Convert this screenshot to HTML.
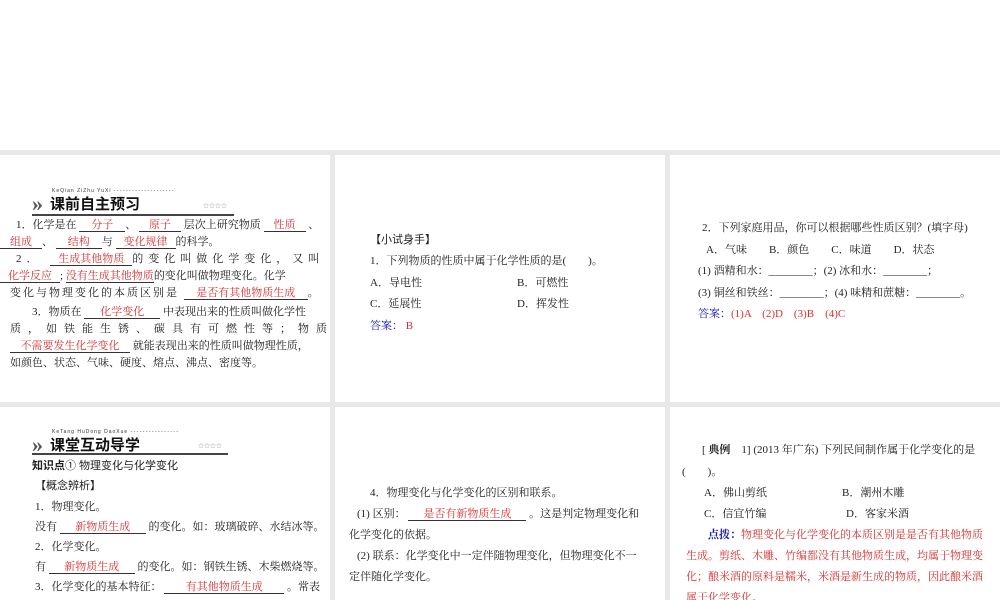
<!DOCTYPE html>
<html><head><meta charset="utf-8"><style>
*{margin:0;padding:0}
body{width:1000px;height:600px;background:#fff;position:relative;overflow:hidden;font-family:"Liberation Serif","Noto Serif CJK SC","Noto Sans CJK SC",serif;font-size:11px;color:#222}
.g{position:absolute;left:0;top:150px;width:1000px;height:450px;background:#e8e8e8}
.p{position:absolute;background:#fff;overflow:hidden}
.l{position:absolute;white-space:nowrap}
.r{color:#d83030}
.b{color:#1a1aa8}
.u{display:inline-block;border-bottom:1px solid #333;text-align:center;color:#d83030;line-height:12px}
.h{font-family:"Liberation Sans","Noto Sans CJK SC",sans-serif;font-weight:bold;font-size:15px;color:#111}
.sm{font-size:5px;letter-spacing:1px;color:#333;font-family:"Liberation Sans",sans-serif}
</style></head><body>
<div class="g"></div>

<div class="p" style="left:0;top:155px;width:330px;height:247px">
 <div class="l" style="left:32px;top:36px;font-size:22px;color:#555;font-weight:bold;letter-spacing:-6px">»</div>
 <div class="l sm" style="left:52px;top:33px">KeQian ZiZhu YuXi <span style="letter-spacing:0">- - - - - - - - - - - - - - - - - - - -</span></div>
 <div class="l h" style="left:50px;top:38px">课前自主预习</div>
 <div class="l" style="left:203px;top:46px;font-size:6px;color:#999">☆☆☆☆</div>
 <div class="l" style="left:32px;top:59px;width:202px;border-top:2px solid #444"></div>
 <div class="l" style="left:16px;top:61px">1．化学是在 <span class="u" style="width:46px">分子</span>、 <span class="u" style="width:42px">原子</span> 层次上研究物质 <span class="u" style="width:42px">性质</span> 、</div>
 <div class="l" style="left:0;top:78px"><span class="u" style="width:42px">组成</span>、 <span class="u" style="width:46px">结构</span>与 <span class="u" style="width:60px">变化规律</span>的科学。</div>
 <div class="l" style="left:16px;top:95px;letter-spacing:5px">2． <span class="u" style="width:82px;letter-spacing:0">生成其他物质</span>的变化叫做化学变化，又叫</div>
 <div class="l" style="left:0;top:112px"><span class="u" style="width:60px">化学反应</span>; <span class="u" style="width:88px">没有生成其他物质</span>的变化叫做物理变化。化学</div>
 <div class="l" style="left:10px;top:129px;letter-spacing:2px">变化与物理变化的本质区别是 <span class="u" style="width:124px;letter-spacing:0">是否有其他物质生成</span>。</div>
 <div class="l" style="left:32px;top:148px">3．物质在 <span class="u" style="width:76px">化学变化</span> 中表现出来的性质叫做化学性</div>
 <div class="l" style="left:10px;top:165px;letter-spacing:7px">质，如铁能生锈、碳具有可燃性等；物质</div>
 <div class="l" style="left:10px;top:182px"><span class="u" style="width:120px">不需要发生化学变化</span> 就能表现出来的性质叫做物理性质，</div>
 <div class="l" style="left:10px;top:199px">如颜色、状态、气味、硬度、熔点、沸点、密度等。</div>
</div>

<div class="p" style="left:335px;top:155px;width:330px;height:247px">
 <div class="l" style="left:35px;top:76px;font-family:'Liberation Sans','Noto Sans CJK SC',sans-serif">【小试身手】</div>
 <div class="l" style="left:35px;top:97px">1．下列物质的性质中属于化学性质的是(　　)。</div>
 <div class="l" style="left:35px;top:119px">A．导电性</div><div class="l" style="left:182px;top:119px">B．可燃性</div>
 <div class="l" style="left:35px;top:140px">C．延展性</div><div class="l" style="left:182px;top:140px">D．挥发性</div>
 <div class="l" style="left:35px;top:162px"><span class="b">答案：</span> <span class="r">B</span></div>
</div>

<div class="p" style="left:670px;top:155px;width:330px;height:247px">
 <div class="l" style="left:32px;top:64px">2．下列家庭用品，你可以根据哪些性质区别？(填字母)</div>
 <div class="l" style="left:36px;top:86px">A．气味　　B．颜色　　C．味道　　D．状态</div>
 <div class="l" style="left:28px;top:107px">(1) 酒精和水：________；(2) 冰和水：________；</div>
 <div class="l" style="left:28px;top:129px">(3) 铜丝和铁丝：________；(4) 味精和蔗糖：________。</div>
 <div class="l" style="left:28px;top:150px"><span class="b">答案：</span><span class="r">(1)A　(2)D　(3)B　(4)C</span></div>
</div>

<div class="p" style="left:0;top:407px;width:330px;height:193px">
 <div class="l" style="left:32px;top:25px;font-size:22px;color:#555;font-weight:bold;letter-spacing:-6px">»</div>
 <div class="l sm" style="left:52px;top:22px">KeTang HuDong DaoXue <span style="letter-spacing:0">- - - - - - - - - - - - - - - -</span></div>
 <div class="l h" style="left:50px;top:27px">课堂互动导学</div>
 <div class="l" style="left:198px;top:34px;font-size:6px;color:#999">☆☆☆☆</div>
 <div class="l" style="left:32px;top:46px;width:196px;border-top:2px solid #444"></div>
 <div class="l" style="left:32px;top:50px;font-family:'Liberation Sans','Noto Sans CJK SC',sans-serif"><b>知识点</b>① 物理变化与化学变化</div>
 <div class="l" style="left:35px;top:70px;font-family:'Liberation Sans','Noto Sans CJK SC',sans-serif">【概念辨析】</div>
 <div class="l" style="left:35px;top:91px">1．物理变化。</div>
 <div class="l" style="left:35px;top:111px">没有 <span class="u" style="width:86px">新物质生成</span> 的变化。如：玻璃破碎、水结冰等。</div>
 <div class="l" style="left:35px;top:131px">2．化学变化。</div>
 <div class="l" style="left:35px;top:151px">有 <span class="u" style="width:86px">新物质生成</span> 的变化。如：钢铁生锈、木柴燃烧等。</div>
 <div class="l" style="left:35px;top:171px">3．化学变化的基本特征： <span class="u" style="width:120px">有其他物质生成</span> 。常表</div>
</div>

<div class="p" style="left:335px;top:407px;width:330px;height:193px">
 <div class="l" style="left:35px;top:77px">4．物理变化与化学变化的区别和联系。</div>
 <div class="l" style="left:22px;top:98px">(1) 区别： <span class="u" style="width:118px">是否有新物质生成</span> 。这是判定物理变化和</div>
 <div class="l" style="left:14px;top:119px">化学变化的依据。</div>
 <div class="l" style="left:22px;top:140px">(2) 联系：化学变化中一定伴随物理变化，但物理变化不一</div>
 <div class="l" style="left:14px;top:161px">定伴随化学变化。</div>
</div>

<div class="p" style="left:670px;top:407px;width:330px;height:193px">
 <div class="l" style="left:32px;top:34px">[ <b>典例</b>　1] (2013 年广东) 下列民间制作属于化学变化的是</div>
 <div class="l" style="left:12px;top:56px">(　　)。</div>
 <div class="l" style="left:34px;top:77px">A．佛山剪纸</div><div class="l" style="left:172px;top:77px">B．潮州木雕</div>
 <div class="l" style="left:34px;top:98px">C．信宜竹编</div><div class="l" style="left:176px;top:98px">D．客家米酒</div>
 <div class="l" style="left:38px;top:119px"><b class="b">点拨：</b><span class="r">物理变化与化学变化的本质区别是是否有其他物质</span></div>
 <div class="l r" style="left:16px;top:140px">生成。剪纸、木雕、竹编都没有其他物质生成，均属于物理变</div>
 <div class="l r" style="left:16px;top:161px">化；酿米酒的原料是糯米，米酒是新生成的物质，因此酿米酒</div>
 <div class="l r" style="left:16px;top:182px">属于化学变化。</div>
</div>
</body></html>
